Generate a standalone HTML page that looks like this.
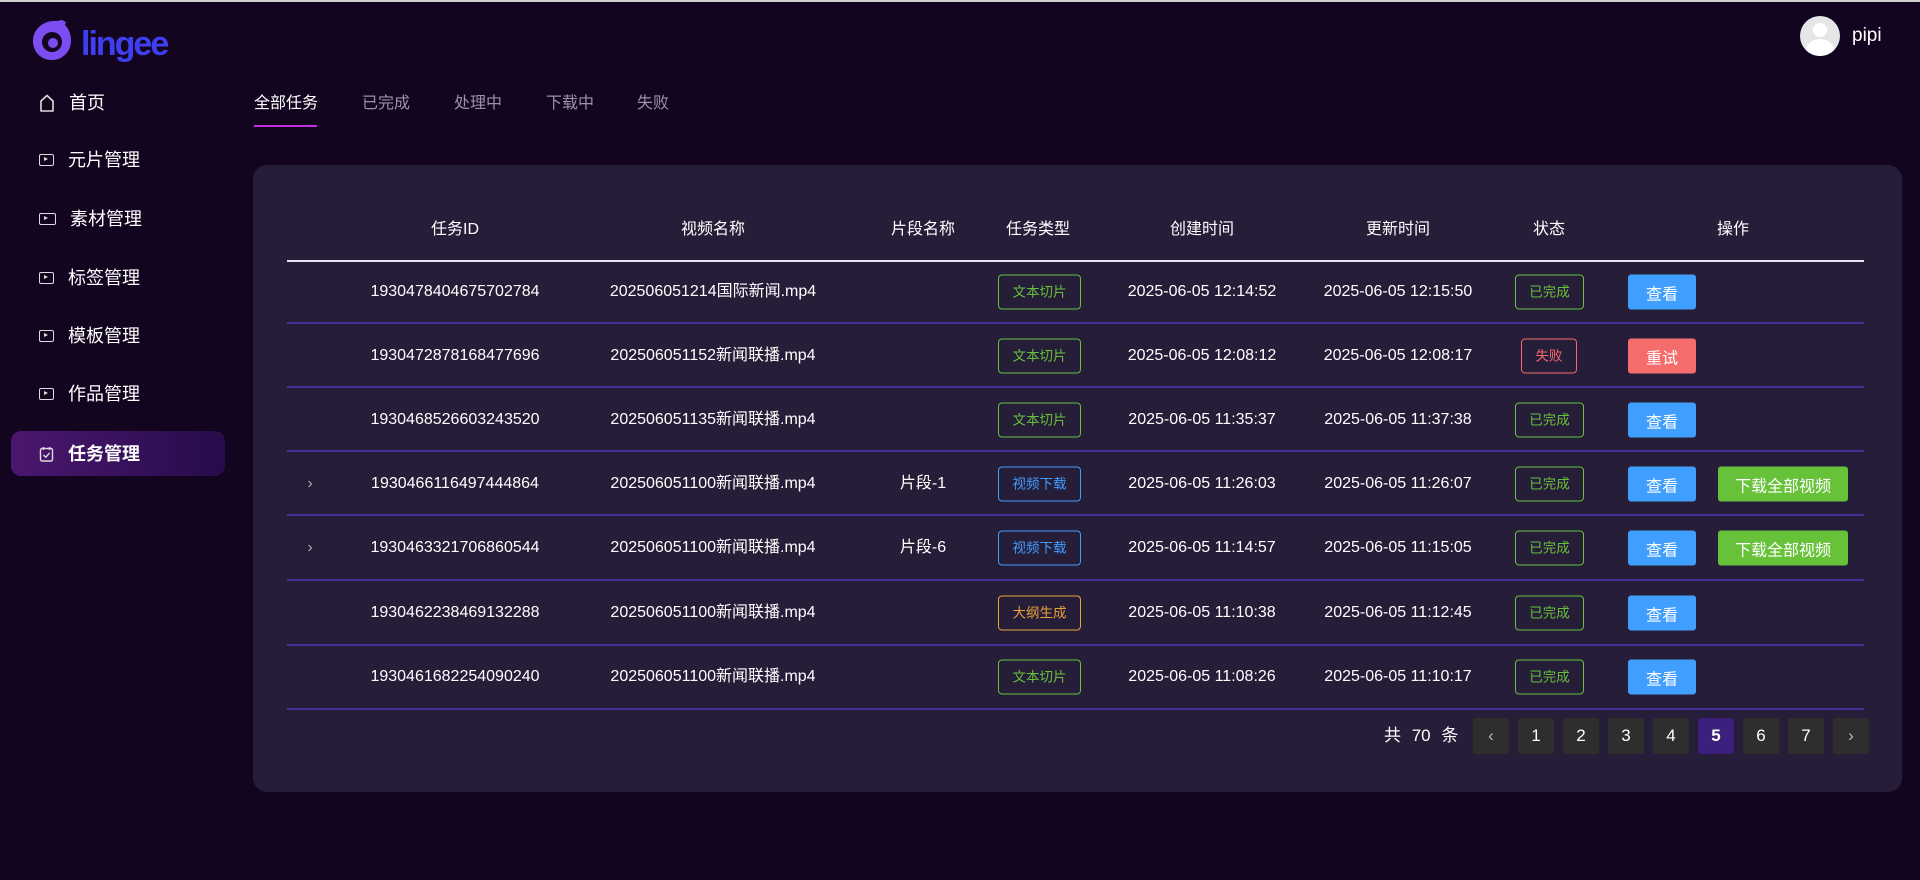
<!DOCTYPE html>
<html><head><meta charset="utf-8"><style>
*{margin:0;padding:0;box-sizing:border-box}
body{width:1920px;height:880px;background:#13041f;font-family:"Liberation Sans","Noto Sans CJK SC",sans-serif;color:#fff;position:relative;overflow:hidden;border-top:2px solid #d0d0d0}
.a{position:absolute}
.menu{position:absolute;left:39px;font-size:18px;color:#fff;display:flex;align-items:center;gap:14px;height:24px;line-height:24px}
.ico{width:15px;height:12px;border:1.5px solid #ddd;border-radius:2px;position:relative}
.ico:after{content:"";position:absolute;left:4px;top:2px;border-left:4px solid #ddd;border-top:2.5px solid transparent;border-bottom:2.5px solid transparent}
.tab{position:absolute;top:92px;font-size:16px;line-height:20px;color:#9a93a6}
.panel{position:absolute;left:253px;top:163px;width:1649px;height:627px;background:#261d38;border-radius:14px}
.th{position:absolute;top:218px;font-size:16px;line-height:20px;color:#fff;transform:translateX(-50%);white-space:nowrap}
.td{position:absolute;font-size:16px;line-height:20px;height:20px;color:#fff;transform:translate(-50%,-50%);white-space:nowrap}
.line{position:absolute;left:287px;width:1577px;height:1.5px;background:#4a2e92}
.tag{position:absolute;height:35px;border:1px solid;border-radius:4px;font-size:13.5px;line-height:16px;display:flex;align-items:center;justify-content:center;transform:translateY(-50%);white-space:nowrap}
.ty{left:998px;width:83px}
.st{left:1515px;width:69px}
.g{color:#67c23a;border-color:#67c23a}
.b{color:#409eff;border-color:#409eff}
.o{color:#e6a23c;border-color:#e6a23c}
.r{color:#f56c6c;border-color:#f56c6c}
.btn{position:absolute;left:1628px;width:68px;height:35px;border-radius:3px;background:#409eff;color:#fff;font-size:16px;display:flex;align-items:center;justify-content:center;transform:translateY(-50%)}
.dl{left:1718px;width:130px;background:#67c23a}
.pg{position:absolute;top:716px;width:36px;height:36px;background:#2e2e2e;border-radius:3px;color:#fff;font-size:17px;display:flex;align-items:center;justify-content:center}
</style></head><body>
<svg class="a" style="left:31px;top:16px" width="180" height="50" viewBox="0 0 180 50">
<path d="M26 3 C14 2 2 10 2 23 C2 34 10 42 21 42 C32 42 40 33 40 23 C40 15 37 10 34 7 L35 4 L31 2 Z" fill="#7c4df2"/>
<circle cx="21" cy="24" r="10" fill="#13041f"/>
<circle cx="22" cy="25" r="5" fill="#7c4df2"/>
<text x="50" y="37" font-family="Liberation Sans,sans-serif" font-size="34" font-weight="bold" fill="#3f3ff2" letter-spacing="-2">lingee</text>
</svg>
<div class="menu" style="top:89px"><svg width="16" height="18" viewBox="0 0 16 18"><path d="M2 17V7L8 1.5L14 7V17Z" fill="none" stroke="#ddd" stroke-width="1.6" stroke-linejoin="round"/></svg><span>首页</span></div>
<div class="menu" style="top:146px"><span class="ico"></span><span>元片管理</span></div>
<div class="menu" style="top:205px"><span class="ico" style="width:17px"></span><span>素材管理</span></div>
<div class="menu" style="top:264px"><span class="ico"></span><span>标签管理</span></div>
<div class="menu" style="top:322px"><span class="ico"></span><span>模板管理</span></div>
<div class="menu" style="top:380px"><span class="ico"></span><span>作品管理</span></div>
<div class="a" style="left:11px;top:429px;width:214px;height:45px;border-radius:10px;background:linear-gradient(90deg,#4b176f,#260c4a)"></div>
<div class="menu" style="top:440px;font-weight:bold"><svg width="15" height="16" viewBox="0 0 14 16"><rect x="1" y="2.5" width="12" height="12.5" rx="1.5" fill="none" stroke="#ddd" stroke-width="1.4"/><path d="M4 1V4M10 1V4M4 9L6.3 11.2L10 7" fill="none" stroke="#ddd" stroke-width="1.4"/></svg><span>任务管理</span></div>

<div class="tab" style="left:254px;color:#fff">全部任务</div>
<div class="a" style="left:254px;top:123px;width:63px;height:2px;background:#c02fe0"></div>
<div class="tab" style="left:362px">已完成</div>
<div class="tab" style="left:454px">处理中</div>
<div class="tab" style="left:546px">下载中</div>
<div class="tab" style="left:637px">失败</div>

<div class="a" style="left:1800px;top:14px;width:40px;height:40px;border-radius:50%;background:#e6e6e6;overflow:hidden"><div class="a" style="left:13px;top:7px;width:14px;height:14px;border-radius:50%;background:#fff"></div><div class="a" style="left:6px;top:23px;width:28px;height:22px;border-radius:50%;background:#fff"></div></div>
<div class="a" style="left:1852px;top:23px;font-size:19px">pipi</div>

<div class="panel"></div>
<div class="th" style="left:455px">任务ID</div>
<div class="th" style="left:713px">视频名称</div>
<div class="th" style="left:923px">片段名称</div>
<div class="th" style="left:1038px">任务类型</div>
<div class="th" style="left:1202px">创建时间</div>
<div class="th" style="left:1398px">更新时间</div>
<div class="th" style="left:1549px">状态</div>
<div class="th" style="left:1733px">操作</div>
<div class="a" style="left:287px;top:258px;width:1577px;height:2px;background:#e8e0f5"></div>
<div class="line" style="top:320px"></div>
<div class="line" style="top:384px"></div>
<div class="line" style="top:448px"></div>
<div class="line" style="top:512px"></div>
<div class="line" style="top:577px"></div>
<div class="line" style="top:642px"></div>
<div class="line" style="top:706px"></div>

<div class="td" style="left:455px;top:290px">1930478404675702784</div>
<div class="td" style="left:713px;top:290px">202506051214国际新闻.mp4</div>
<div class="tag g ty" style="top:290px">文本切片</div>
<div class="td" style="left:1202px;top:290px">2025-06-05 12:14:52</div>
<div class="td" style="left:1398px;top:290px">2025-06-05 12:15:50</div>
<div class="tag g st" style="top:290px">已完成</div>
<div class="btn" style="top:290px">查看</div>

<div class="td" style="left:455px;top:354px">1930472878168477696</div>
<div class="td" style="left:713px;top:354px">202506051152新闻联播.mp4</div>
<div class="tag g ty" style="top:354px">文本切片</div>
<div class="td" style="left:1202px;top:354px">2025-06-05 12:08:12</div>
<div class="td" style="left:1398px;top:354px">2025-06-05 12:08:17</div>
<div class="tag r" style="left:1521px;width:56px;top:354px">失败</div>
<div class="btn" style="top:354px;background:#f56c6c">重试</div>

<div class="td" style="left:455px;top:418px">1930468526603243520</div>
<div class="td" style="left:713px;top:418px">202506051135新闻联播.mp4</div>
<div class="tag g ty" style="top:418px">文本切片</div>
<div class="td" style="left:1202px;top:418px">2025-06-05 11:35:37</div>
<div class="td" style="left:1398px;top:418px">2025-06-05 11:37:38</div>
<div class="tag g st" style="top:418px">已完成</div>
<div class="btn" style="top:418px">查看</div>

<div class="td" style="left:310px;top:482px;color:#aaa">›</div>
<div class="td" style="left:455px;top:482px">1930466116497444864</div>
<div class="td" style="left:713px;top:482px">202506051100新闻联播.mp4</div>
<div class="td" style="left:923px;top:482px">片段-1</div>
<div class="tag b ty" style="top:482px">视频下载</div>
<div class="td" style="left:1202px;top:482px">2025-06-05 11:26:03</div>
<div class="td" style="left:1398px;top:482px">2025-06-05 11:26:07</div>
<div class="tag g st" style="top:482px">已完成</div>
<div class="btn" style="top:482px">查看</div>
<div class="btn dl" style="top:482px">下载全部视频</div>

<div class="td" style="left:310px;top:546px;color:#aaa">›</div>
<div class="td" style="left:455px;top:546px">1930463321706860544</div>
<div class="td" style="left:713px;top:546px">202506051100新闻联播.mp4</div>
<div class="td" style="left:923px;top:546px">片段-6</div>
<div class="tag b ty" style="top:546px">视频下载</div>
<div class="td" style="left:1202px;top:546px">2025-06-05 11:14:57</div>
<div class="td" style="left:1398px;top:546px">2025-06-05 11:15:05</div>
<div class="tag g st" style="top:546px">已完成</div>
<div class="btn" style="top:546px">查看</div>
<div class="btn dl" style="top:546px">下载全部视频</div>

<div class="td" style="left:455px;top:611px">1930462238469132288</div>
<div class="td" style="left:713px;top:611px">202506051100新闻联播.mp4</div>
<div class="tag o ty" style="top:611px">大纲生成</div>
<div class="td" style="left:1202px;top:611px">2025-06-05 11:10:38</div>
<div class="td" style="left:1398px;top:611px">2025-06-05 11:12:45</div>
<div class="tag g st" style="top:611px">已完成</div>
<div class="btn" style="top:611px">查看</div>

<div class="td" style="left:455px;top:675px">1930461682254090240</div>
<div class="td" style="left:713px;top:675px">202506051100新闻联播.mp4</div>
<div class="tag g ty" style="top:675px">文本切片</div>
<div class="td" style="left:1202px;top:675px">2025-06-05 11:08:26</div>
<div class="td" style="left:1398px;top:675px">2025-06-05 11:10:17</div>
<div class="tag g st" style="top:675px">已完成</div>
<div class="btn" style="top:675px">查看</div>

<div class="a" style="left:1384px;top:724px;font-size:17px;line-height:20px;word-spacing:6px">共 70 条</div>
<div class="pg" style="left:1473px;color:#bbb">‹</div>
<div class="pg" style="left:1518px">1</div>
<div class="pg" style="left:1563px">2</div>
<div class="pg" style="left:1608px">3</div>
<div class="pg" style="left:1653px">4</div>
<div class="pg" style="left:1698px;background:#3d1f7e;font-weight:bold">5</div>
<div class="pg" style="left:1743px">6</div>
<div class="pg" style="left:1788px">7</div>
<div class="pg" style="left:1833px;color:#bbb">›</div>
</body></html>
